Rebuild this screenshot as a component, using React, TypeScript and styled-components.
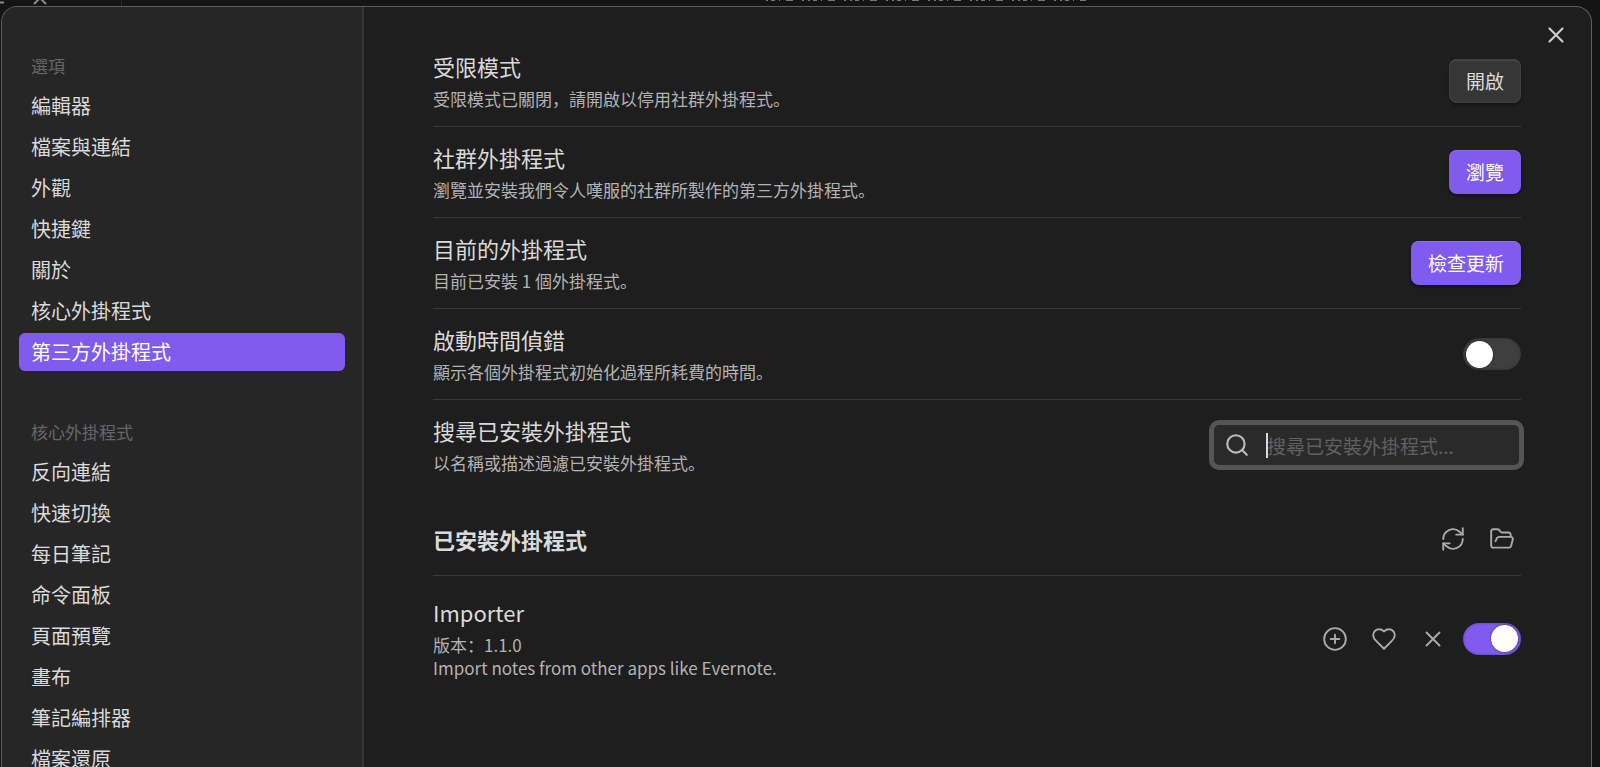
import React, { useState } from "react";
import styled, { createGlobalStyle, css } from "styled-components";

const GlobalStyle = createGlobalStyle`
  *, *::before, *::after { box-sizing: border-box; }
  body {
    margin: 0;
    background: #141414;
    color: #dadada;
    font-family: "Noto Sans CJK SC", "Open Sans", sans-serif;
    font-weight: 400;
  }
  button, input { font: inherit; color: inherit; }
  h2, h3, p, ul { margin: 0; padding: 0; font: inherit; }
`;

const Backdrop = styled.div`
  height: 100vh;
  display: flex;
  flex-direction: column;
  overflow: hidden;
  background: #141414;
`;

const AppStrip = styled.div`
  flex: none;
  height: 6px;
  svg { display: block; }
`;

const Modal = styled.div`
  flex: 1;
  min-height: 0;
  display: flex;
  position: relative;
  margin: 0 8px 0 1px;
  border: 1px solid #5e5e5e;
  border-bottom: 0;
  border-radius: 16px 16px 0 0;
  background: #1e1e1e;
  overflow: hidden;
`;

const Sidebar = styled.nav`
  flex: none;
  width: 362px;
  padding: 40px 17px 0;
  border-right: 2px solid #363636;
  background: #262626;
  overflow: hidden;
`;

const NavGroup = styled.section`
  margin-bottom: 42px;
`;

const NavHeading = styled.h2`
  padding: 0 12px;
  margin-bottom: 2px;
  font-size: 17px;
  line-height: 38px;
  color: #666;
`;

const NavList = styled.ul`
  display: flex;
  flex-direction: column;
  gap: 3px;
  list-style: none;
`;

const NavItem = styled.button<{ $active?: boolean }>`
  display: block;
  width: 100%;
  height: 38px;
  padding: 0 12px;
  border: 0;
  border-radius: 6px;
  background: ${(p) => (p.$active ? "#7f5bee" : "transparent")};
  color: ${(p) => (p.$active ? "#fff" : "#dadada")};
  font-size: 20px;
  line-height: 38px;
  text-align: left;
  white-space: nowrap;
  cursor: pointer;
`;

const Content = styled.main`
  flex: 1;
  min-width: 0;
  padding: 29px 70px 0 69px;
`;

const Row = styled.div<{ $last?: boolean }>`
  display: flex;
  align-items: center;
  justify-content: space-between;
  gap: 16px;
  padding: 16px 0;
  border-bottom: 1px solid ${(p) => (p.$last ? "transparent" : "#383838")};
`;

const Name = styled.h3`
  font-size: 22px;
  line-height: 28px;
  margin-bottom: 7px;
  color: #dadada;
`;

const Desc = styled.p`
  font-size: 17px;
  line-height: 23px;
  color: #b3b3b3;
`;

const Controls = styled.div`
  display: flex;
  align-items: center;
  gap: 11px;
`;

const Button = styled.button<{ $primary?: boolean }>`
  height: 44px;
  padding: 0 17px;
  border: 0;
  border-radius: 8px;
  font-size: 19px;
  line-height: 44px;
  white-space: nowrap;
  cursor: pointer;
  ${(p) =>
    p.$primary
      ? css`
          background: #7f5bee;
          color: #fff;
          box-shadow: inset 0 1px 0 #8d6df0, 0 2px 3px #0006;
        `
      : css`
          background: #363636;
          color: #dadada;
          box-shadow: inset 0 0 0 1px #414141, inset 0 2px 0 #444, 0 2px 3px #0005;
        `}
`;

const Switch = styled.input`
  appearance: none;
  flex: none;
  width: 58px;
  height: 32px;
  margin: 0;
  padding: 2px 3px;
  display: flex;
  align-items: center;
  border-radius: 16px;
  background: #3f3f3f;
  box-shadow: inset 0 0 3px #0005;
  cursor: pointer;
  &::before {
    content: "";
    width: 27px;
    height: 27px;
    border-radius: 50%;
    background: #fff;
    box-shadow: 0 0 2px #0009;
  }
  &:checked {
    background: #7f5bee;
    justify-content: flex-end;
  }
`;

const SearchField = styled.label`
  position: relative;
  display: flex;
  align-items: center;
  width: 309px;
  height: 44px;
  padding-left: 10px;
  gap: 17px;
  border: 2px solid #555;
  border-radius: 7px;
  background: #2a2a2a;
  color: #bababa;
  box-shadow: 0 0 0 3px #555;
`;

const SearchInput = styled.input`
  flex: 1;
  min-width: 0;
  height: 100%;
  padding: 0;
  border: 0;
  outline: 0;
  background: transparent;
  color: #dadada;
  font-size: 19px;
  &::placeholder { color: #606060; opacity: 1; }
`;

const Caret = styled.span`
  position: absolute;
  left: 52px;
  top: 8px;
  width: 2px;
  height: 25px;
  background: #dadada;
`;

const SectionHead = styled(Row)`
  margin-top: 14px;
  padding: 15px 0 17px;
`;

const SectionTitle = styled.h2`
  font-size: 22px;
  line-height: 38px;
  font-weight: 700;
  color: #dadada;
`;

const IconButton = styled.button`
  display: flex;
  padding: 6px;
  border: 0;
  background: transparent;
  color: #aaa;
  cursor: pointer;
`;

const CloseButton = styled(IconButton)`
  position: absolute;
  top: 9px;
  right: 16px;
  color: #ccc;
`;

const PluginRow = styled(Row)`
  padding: 22px 0;
`;

const icons = {
  close: <path d="M18 6 6 18M6 6l12 12" />,
  search: (
    <>
      <circle cx="11" cy="11" r="8" />
      <path d="m21 21-4.3-4.3" />
    </>
  ),
  refresh: (
    <>
      <path d="M21 2v6h-6" />
      <path d="M3 12a9 9 0 0 1 15-6.7L21 8" />
      <path d="M3 22v-6h6" />
      <path d="M21 12a9 9 0 0 1-15 6.7L3 16" />
    </>
  ),
  folder: (
    <path d="m6 14 1.45-2.9A2 2 0 0 1 9.24 10H20a2 2 0 0 1 1.94 2.5l-1.55 6a2 2 0 0 1-1.94 1.5H4a2 2 0 0 1-2-2V5c0-1.1.9-2 2-2h3.93a2 2 0 0 1 1.66.9l.82 1.2a2 2 0 0 0 1.66.9H18a2 2 0 0 1 2 2v2" />
  ),
  plus: (
    <>
      <circle cx="12" cy="12" r="10" />
      <path d="M8 12h8M12 8v8" />
    </>
  ),
  heart: (
    <path d="M19 14c1.49-1.46 3-3.21 3-5.5A5.5 5.5 0 0 0 16.5 3c-1.76 0-3 .5-4.5 2-1.5-1.5-2.74-2-4.5-2A5.5 5.5 0 0 0 2 8.500c0 2.300 1.500 4.050 3 5.500l7 7Z" />
  ),
};

function Icon({ name, weight = 1.75 }: { name: keyof typeof icons; weight?: number }) {
  return (
    <svg width="26" height="26" viewBox="0 0 24 24" fill="none" stroke="currentColor"
      strokeWidth={weight} strokeLinecap="round" strokeLinejoin="round" aria-hidden="true">
      {icons[name]}
    </svg>
  );
}

const options = ["編輯器", "檔案與連結", "外觀", "快捷鍵", "關於", "核心外掛程式", "第三方外掛程式"];
const corePlugins = ["反向連結", "快速切換", "每日筆記", "命令面板", "頁面預覽", "畫布", "筆記編排器", "檔案還原"];

function Group({ title, items, active, onPick }: {
  title: string; items: string[]; active: string; onPick: (s: string) => void;
}) {
  return (
    <NavGroup>
      <NavHeading>{title}</NavHeading>
      <NavList>
        {items.map((item) => (
          <li key={item}>
            <NavItem type="button" $active={item === active} onClick={() => onPick(item)}>{item}</NavItem>
          </li>
        ))}
      </NavList>
    </NavGroup>
  );
}

function Setting({ name, desc, htmlFor, last, children }: {
  name: string; desc: string; htmlFor?: string; last?: boolean; children: React.ReactNode;
}) {
  return (
    <Row $last={last}>
      <div>
        <Name>{htmlFor ? <label htmlFor={htmlFor}>{name}</label> : name}</Name>
        <Desc>{desc}</Desc>
      </div>
      <Controls>{children}</Controls>
    </Row>
  );
}

export default function App() {
  const [active, setActive] = useState("第三方外掛程式");
  return (
    <>
      <GlobalStyle />
      <Backdrop>
        <AppStrip>
          <svg width="1100" height="6" fill="none" aria-hidden="true">
            <path d="M0 2.500h4M34 4l6-6 6 6" stroke="#8a8a8a" strokeWidth="2" />
            <path d="M121.500 0v6" stroke="#2a2a2a" />
            <path d="M766 .5h320" stroke="#777" strokeDasharray="2 3 4 4 1 6 7 9 2 4" />
          </svg>
        </AppStrip>
        <Modal role="dialog" aria-label="第三方外掛程式">
          <Sidebar>
            <Group title="選項" items={options} active={active} onPick={setActive} />
            <Group title="核心外掛程式" items={corePlugins} active={active} onPick={setActive} />
          </Sidebar>
          <Content>
            <Setting name="受限模式" desc="受限模式已關閉，請開啟以停用社群外掛程式。">
              <Button type="button">開啟</Button>
            </Setting>
            <Setting name="社群外掛程式" desc="瀏覽並安裝我們令人嘆服的社群所製作的第三方外掛程式。">
              <Button type="button" $primary>瀏覽</Button>
            </Setting>
            <Setting name="目前的外掛程式" desc="目前已安裝 1 個外掛程式。">
              <Button type="button" $primary>檢查更新</Button>
            </Setting>
            <Setting name="啟動時間偵錯" desc="顯示各個外掛程式初始化過程所耗費的時間。" htmlFor="startup">
              <Switch id="startup" type="checkbox" role="switch" />
            </Setting>
            <Setting name="搜尋已安裝外掛程式" desc="以名稱或描述過濾已安裝外掛程式。" htmlFor="search" last>
              <SearchField>
                <Icon name="search" weight={2} />
                <SearchInput id="search" type="text" placeholder="搜尋已安裝外掛程式..." />
                <Caret />
              </SearchField>
            </Setting>
            <SectionHead>
              <SectionTitle>已安裝外掛程式</SectionTitle>
              <Controls>
                <IconButton type="button" aria-label="重新載入外掛程式"><Icon name="refresh" /></IconButton>
                <IconButton type="button" aria-label="開啟外掛程式資料夾"><Icon name="folder" /></IconButton>
              </Controls>
            </SectionHead>
            <PluginRow $last>
              <div>
                <Name><label htmlFor="importer">Importer</label></Name>
                <Desc>版本：1.1.0</Desc>
                <Desc>Import notes from other apps like Evernote.</Desc>
              </div>
              <Controls>
                <IconButton type="button" aria-label="快捷鍵"><Icon name="plus" /></IconButton>
                <IconButton type="button" aria-label="贊助"><Icon name="heart" /></IconButton>
                <IconButton type="button" aria-label="解除安裝"><Icon name="close" /></IconButton>
                <Switch id="importer" type="checkbox" role="switch" defaultChecked />
              </Controls>
            </PluginRow>
          </Content>
          <CloseButton type="button" aria-label="關閉"><Icon name="close" weight={2} /></CloseButton>
        </Modal>
      </Backdrop>
    </>
  );
}
